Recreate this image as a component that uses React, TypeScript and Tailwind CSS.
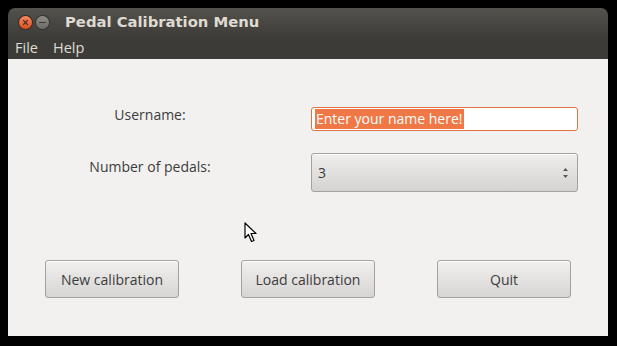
import React from "react";

const font = { fontFamily: '"Open Sans", "DejaVu Sans", sans-serif' };

const Cursor = () => (
  <svg width="14" height="22" viewBox="0 0 14 22" className="absolute left-[244px] top-[222px]">
    <path
      d="M1 1 L1 16 L4.5 12.5 L7.5 19.5 L10 18.5 L7 11.5 L12 11.5 Z"
      fill="#fff"
      stroke="#000"
      strokeWidth="1.2"
      strokeLinejoin="round"
    />
  </svg>
);

const PushButton = ({ label }: { label: string }) => (
  <button className="h-[38px] w-[134px] rounded-[3px] border border-[#a3a29f] bg-gradient-to-b from-[#f1f0ef] to-[#d6d5d3] text-[14px] text-[#3c3c3c] shadow-[inset_0_1px_0_#fbfbfb]">
    {label}
  </button>
);

export default function App() {
  return (
    <div className="relative h-[346px] w-[617px] bg-black pl-[8px] pt-[8px]" style={font}>
      <div className="flex h-[328px] w-[600px] flex-col overflow-hidden rounded-t-[7px]">
        {/* title bar */}
        <div className="flex h-[29px] items-center bg-gradient-to-b from-[#53524d] to-[#3d3c38] pl-[11px]">
          <div className="flex h-[13px] w-[13px] items-center justify-center rounded-full bg-gradient-to-b from-[#f58a5c] to-[#dd4a16] shadow-[0_0_0_1px_#3a2a22]">
            <svg width="7" height="7" viewBox="0 0 7 7">
              <path d="M1.2 1.2 L5.8 5.8 M5.8 1.2 L1.2 5.8" stroke="#3b2a22" strokeWidth="1.2" />
            </svg>
          </div>
          <div className="ml-[4px] flex h-[13px] w-[13px] items-center justify-center rounded-full bg-gradient-to-b from-[#8f8e89] to-[#6c6b66] shadow-[0_0_0_1px_#33322e]">
            <div className="h-[1.5px] w-[7px] bg-[#3a3935]" />
          </div>
          <span className="ml-[16px] font-['DejaVu_Sans',sans-serif] text-[14.8px] font-bold text-[#dfdbd2]">
            Pedal Calibration Menu
          </span>
        </div>
        {/* menu bar */}
        <div className="flex h-[22px] items-center gap-[15px] bg-[#3c3b37] pl-[7px] text-[14.5px] text-[#dfdbd2]">
          <span>File</span>
          <span>Help</span>
        </div>
        {/* content */}
        <div className="flex flex-1 flex-col bg-[#f2f1f0] pt-[48px]">
          <div className="flex h-[24px] pl-[22px]">
            <div className="w-[240px] -mt-[3px] text-center text-[14px] text-[#3c3c3c]">Username:</div>
            <div className="ml-[41px] flex h-[24px] w-[267px] items-center rounded-[3px] border border-[#e3713f] bg-white px-[3px]">
              <span className="bg-[#f07746] px-[1px] text-[14px] leading-[20px] text-white">Enter your name here!</span>
            </div>
          </div>
          <div className="mt-[22px] flex h-[39px] pl-[22px]">
            <div className="w-[240px] pt-[3px] text-center text-[14px] text-[#3c3c3c]">Number of pedals:</div>
            <div className="ml-[41px] flex h-[39px] w-[267px] items-center justify-between rounded-[3px] border border-[#a3a29f] bg-gradient-to-b from-[#f0efee] to-[#d4d3d1] pl-[6px] pr-[8px] shadow-[inset_0_1px_0_#fbfbfb]">
              <span className="text-[14px] text-[#3c3c3c]">3</span>
              <svg width="7" height="12" viewBox="0 0 7 12">
                <path d="M3.5 1 L6 4 L1 4 Z M3.5 11 L6 8 L1 8 Z" fill="#5a5955" />
              </svg>
            </div>
          </div>
          <div className="mt-[68px] flex gap-[62px] pl-[37px]">
            <PushButton label="New calibration" />
            <PushButton label="Load calibration" />
            <PushButton label="Quit" />
          </div>
        </div>
      </div>
      <Cursor />
    </div>
  );
}
